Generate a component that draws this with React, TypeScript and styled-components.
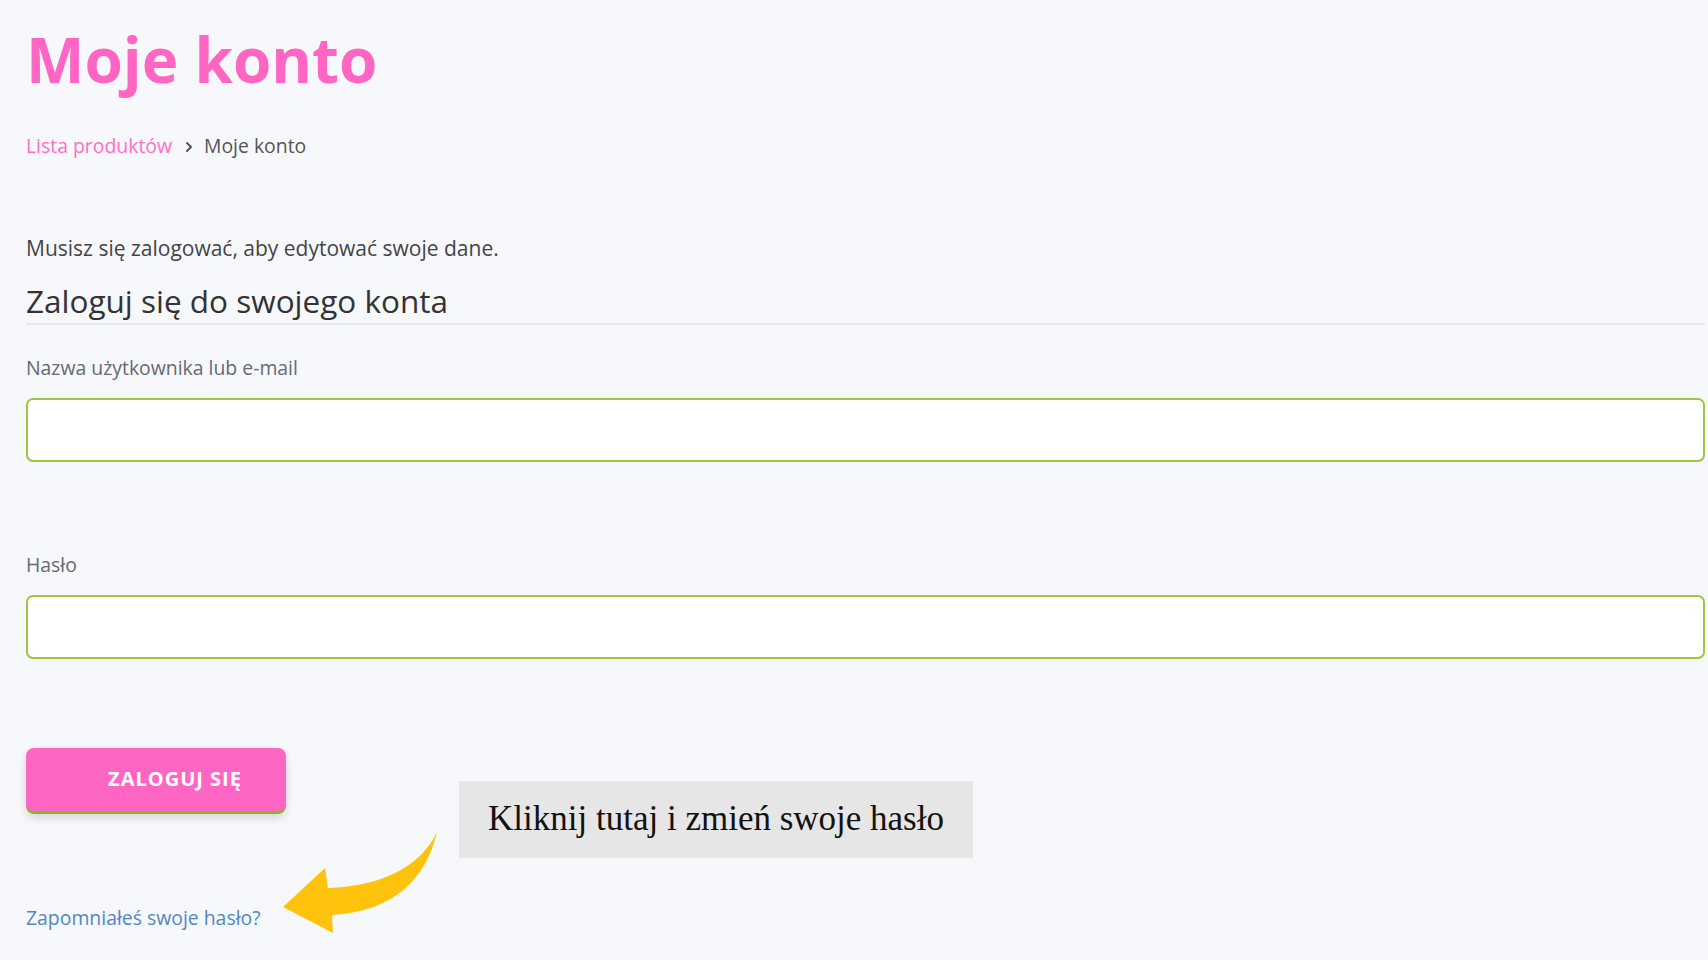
import React from "react";
import styled, { createGlobalStyle } from "styled-components";

const GlobalStyle = createGlobalStyle`
  html, body {
    margin: 0;
    padding: 0;
    background: #f7f8fc;
  }
  body {
    font-family: "Open Sans", "Liberation Sans", sans-serif;
    color: #444;
  }
  * { box-sizing: border-box; }
`;

const Page = styled.main`
  position: relative;
  min-height: 960px;
  padding: 28px 3px 40px 26px;
  display: flex;
  flex-direction: column;
`;

const Title = styled.h1`
  margin: 0;
  font-family: "Open Sans", sans-serif;
  font-weight: 700;
  font-size: 62px;
  line-height: 62px;
  color: #ff66c4;
`;

const Breadcrumbs = styled.nav`
  margin-top: 43px;
  display: flex;
  align-items: center;
  font-size: 19.4px;
  line-height: 26px;
`;

const Crumb = styled.a<{ $current?: boolean }>`
  color: ${(p) => (p.$current ? "#555" : "#ff6ec7")};
  text-decoration: none;
`;

const Sep = styled.span`
  display: inline-flex;
  align-items: center;
  margin: 2px 11px 0 13px;
  color: #555;
`;

const Notice = styled.p`
  margin: 75px 0 0;
  font-size: 21px;
  line-height: 28px;
  color: #444;
`;

const FormTitle = styled.h2`
  margin: 19px 0 0;
  font-weight: 400;
  font-size: 31.5px;
  line-height: 40px;
  color: #333;
  padding-bottom: 2px;
  border-bottom: 2px solid #e6e7eb;
`;

const Field = styled.div<{ $first?: boolean }>`
  margin-top: ${(p) => (p.$first ? "30px" : "90px")};
  display: flex;
  flex-direction: column;
  gap: 17px;
`;

const Label = styled.label`
  font-size: 19.4px;
  line-height: 26px;
  color: #666a72;
`;

const Input = styled.input`
  height: 64px;
  width: 100%;
  background: #fff;
  border: 2px solid #9fc63e;
  border-radius: 7px;
  outline: none;
  padding: 0 16px;
  font-size: 19px;
`;

const LoginButton = styled.button`
  margin-top: 89px;
  width: 260px;
  height: 66px;
  align-self: flex-start;
  background: #ff66c4;
  color: #fff;
  border: none;
  border-bottom: 3px solid #8cb81f;
  border-radius: 8px;
  box-shadow: 0 4px 10px rgba(0, 0, 0, 0.14);
  font-family: "Open Sans", sans-serif;
  font-weight: 700;
  font-size: 20px;
  letter-spacing: 1px;
  padding: 0 0 2px 38px;
  cursor: pointer;
`;

const ForgotLink = styled.a`
  margin-top: 91px;
  align-self: flex-start;
  font-size: 19.4px;
  line-height: 26px;
  color: #5287c4;
  text-decoration: none;
`;

const Callout = styled.div`
  position: absolute;
  left: 459px;
  top: 781px;
  width: 514px;
  height: 77px;
  background: #e6e6e6;
  display: flex;
  align-items: center;
  justify-content: center;
  font-family: "Liberation Serif", "DejaVu Serif", serif;
  font-size: 35px;
  color: #111;
  padding-bottom: 1px;
`;

const ArrowMark = styled.svg`
  position: absolute;
  left: 280px;
  top: 828px;
`;

export default function App() {
  return (
    <>
      <GlobalStyle />
      <Page>
        <Title>Moje konto</Title>
        <Breadcrumbs>
          <Crumb href="#">Lista produktów</Crumb>
          <Sep>
            <svg width="8" height="12" viewBox="0 0 8 12">
              <path d="M2 2 L6 6 L2 10" fill="none" stroke="#555" strokeWidth="2" strokeLinecap="round" strokeLinejoin="round" />
            </svg>
          </Sep>
          <Crumb $current>Moje konto</Crumb>
        </Breadcrumbs>
        <Notice>Musisz się zalogować, aby edytować swoje dane.</Notice>
        <FormTitle>Zaloguj się do swojego konta</FormTitle>
        <Field $first>
          <Label htmlFor="user">Nazwa użytkownika lub e-mail</Label>
          <Input id="user" type="text" />
        </Field>
        <Field>
          <Label htmlFor="pass">Hasło</Label>
          <Input id="pass" type="password" />
        </Field>
        <LoginButton>ZALOGUJ SIĘ</LoginButton>
        <ForgotLink href="#">Zapomniałeś swoje hasło?</ForgotLink>

        <Callout>Kliknij tutaj i zmień swoje hasło</Callout>
        <ArrowMark width="160" height="110" viewBox="0 0 160 110">
          <path
            d="M157 4 C140 40 100 58 48 60 L45 40 L3 79 L53 105 L52 87 C112 84 146 52 157 4 Z"
            fill="#ffc30d"
          />
        </ArrowMark>
      </Page>
    </>
  );
}
